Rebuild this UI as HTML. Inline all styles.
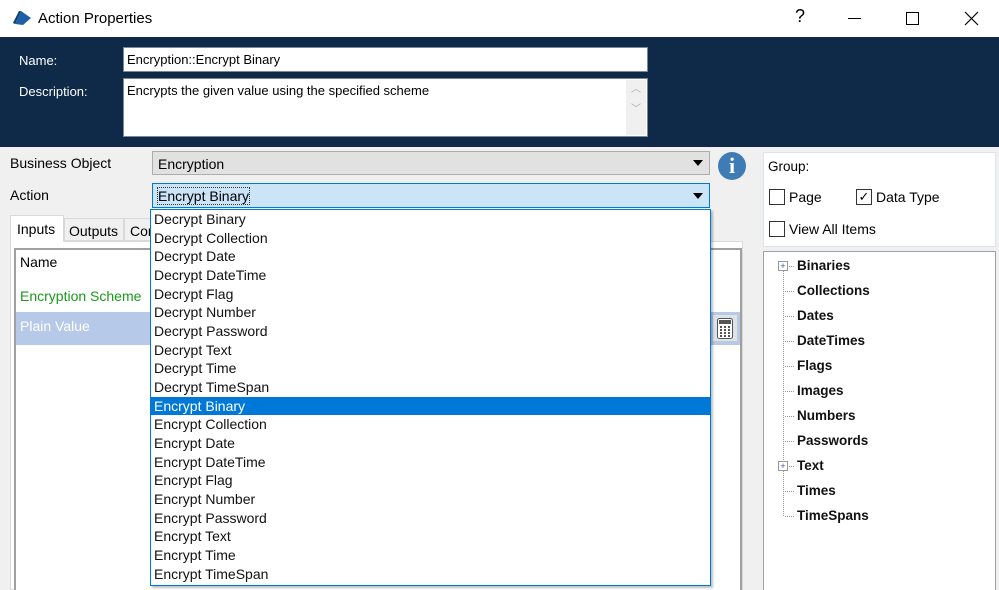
<!DOCTYPE html>
<html><head><meta charset="utf-8"><style>
*{margin:0;padding:0;box-sizing:border-box}
body{width:999px;height:590px;overflow:hidden;background:#f0f0f0;font-family:"Liberation Sans",sans-serif;font-size:13px;color:#000;position:relative}
.a{position:absolute}
.dd div{height:18.68px;line-height:18.68px;padding-left:3px;font-size:14px;color:#111}
.tree div{position:absolute;left:33px;font-weight:bold;font-size:13.5px;color:#111}
.tree i{position:absolute;left:21px;width:9px;height:1px;border-top:1px dotted #999}
</style></head><body>
<div class="a" style="left:0;top:0;width:999px;height:37px;background:#fff"></div>
<svg class="a" style="left:13px;top:9px" width="20" height="18"><path d="M2 15 L8 2 L18 9 L10 16 Z" fill="#1f5fa8"/><path d="M2 15 L8 2 L6 2 L0 14Z" fill="#0e3c70"/></svg>
<div class="a" style="left:38px;top:10px;font-size:15px">Action Properties</div>
<div class="a" style="left:795px;top:6px;font-size:18px">?</div>
<div class="a" style="left:848px;top:18px;width:13px;height:1px;background:#000"></div>
<div class="a" style="left:906px;top:12px;width:13px;height:13px;border:1px solid #000"></div>
<svg class="a" style="left:964px;top:11px" width="15" height="15"><path d="M1 1L14 14M14 1L1 14" stroke="#000" stroke-width="1.2"/></svg>
<div class="a" style="left:0;top:37px;width:999px;height:110px;background:#0e2a48"></div>
<div class="a" style="left:19px;top:53px;color:#fff;font-size:13px">Name:</div>
<div class="a" style="left:19px;top:84px;color:#fff;font-size:13px">Description:</div>
<div class="a" style="left:123px;top:47px;width:525px;height:25px;background:#fff;border:1px solid #7a8796;padding:4px 3px;font-size:13px">Encryption::Encrypt Binary</div>
<div class="a" style="left:123px;top:78px;width:525px;height:59px;background:#fff;border:1px solid #7a8796;padding:4px 3px;font-size:13px">Encrypts the given value using the specified scheme</div>
<div class="a" style="left:626px;top:80px;width:20px;height:55px;background:#f0f0f0;color:#aaa;font-size:10px;text-align:center;line-height:20px">︿<br>﹀</div>
<div class="a" style="left:10px;top:155px;font-size:14px">Business Object</div>
<div class="a" style="left:10px;top:187px;font-size:14px">Action</div>
<div class="a" style="left:152px;top:151px;width:558px;height:24px;background:#e1e1e1;border:1px solid #adadad;padding:4px 5px;font-size:14px">Encryption</div>
<div class="a" style="left:693px;top:160px;border:5px solid transparent;border-top:6px solid #000;border-bottom:0"></div>
<div class="a" style="left:152px;top:183px;width:558px;height:25px;background:#cce4f7;border:1px solid #0078d7;padding:4px 5px;font-size:14px"><span style="outline:1px dotted #333;">Encrypt Binary</span></div>
<div class="a" style="left:693px;top:193px;border:5px solid transparent;border-top:6px solid #000;border-bottom:0"></div>
<div class="a" style="left:718px;top:152px;width:28px;height:28px;border-radius:50%;background:#3f7cb6;color:#fff;font:bold 22px 'Liberation Serif',serif;text-align:center;line-height:28px">i</div>
<div class="a" style="left:10px;top:241px;width:733px;height:349px;background:#fff;border:1px solid #d9d9d9"></div>
<div class="a" style="left:10px;top:215px;width:54px;height:27px;background:#fff;border:1px solid #d9d9d9;border-bottom:0;padding:5px 6px;font-size:14px">Inputs</div>
<div class="a" style="left:64px;top:218px;width:60px;height:23px;background:#f0f0f0;border:1px solid #d9d9d9;padding:4px 4px;font-size:14px">Outputs</div>
<div class="a" style="left:124px;top:218px;width:30px;height:23px;background:#f0f0f0;border:1px solid #d9d9d9;padding:4px 5px;font-size:14px;overflow:hidden">Con</div>
<div class="a" style="left:14px;top:248px;width:728px;height:342px;background:#fff;border-left:2px solid #a0a0a0;border-top:2px solid #a0a0a0"></div>
<div class="a" style="left:740px;top:248px;width:2px;height:342px;background:#a0a0a0"></div>
<div class="a" style="left:20px;top:254px;font-size:14px">Name</div>
<div class="a" style="left:20px;top:288px;font-size:14px;color:#1a9a1a">Encryption Scheme</div>
<div class="a" style="left:16px;top:312px;width:724px;height:33px;background:#b7c9e8"></div>
<div class="a" style="left:20px;top:318px;font-size:14px;color:#fff">Plain Value</div>
<div class="a" style="left:712px;top:314px;width:26px;height:28px;background:#dde3ea;border:1px solid #c0c8d2"></div>
<svg class="a" style="left:717px;top:318px" width="16" height="21"><rect x="0.5" y="0.5" width="15" height="20" rx="2" fill="#fff" stroke="#555"/><rect x="2" y="2" width="12" height="4" fill="#555"/><g fill="#555"><rect x="3" y="8" width="2" height="2"/><rect x="7" y="8" width="2" height="2"/><rect x="11" y="8" width="2" height="2"/><rect x="3" y="11" width="2" height="2"/><rect x="7" y="11" width="2" height="2"/><rect x="11" y="11" width="2" height="2"/><rect x="3" y="14" width="2" height="2"/><rect x="7" y="14" width="2" height="2"/><rect x="11" y="14" width="2" height="2"/><rect x="3" y="17" width="2" height="2"/><rect x="7" y="17" width="2" height="2"/><rect x="11" y="17" width="2" height="2"/></g></svg>
<div class="a dd" style="left:150px;top:209px;width:561px;height:377px;background:#fff;border:1px solid #0078d7;box-shadow:2px 2px 2px rgba(0,0,0,.25)">
<div>Decrypt Binary</div><div>Decrypt Collection</div><div>Decrypt Date</div><div>Decrypt DateTime</div><div>Decrypt Flag</div><div>Decrypt Number</div><div>Decrypt Password</div><div>Decrypt Text</div><div>Decrypt Time</div><div>Decrypt TimeSpan</div>
<div style="background:#0078d7;color:#fff">Encrypt Binary</div><div>Encrypt Collection</div><div>Encrypt Date</div><div>Encrypt DateTime</div><div>Encrypt Flag</div><div>Encrypt Number</div><div>Encrypt Password</div><div>Encrypt Text</div><div>Encrypt Time</div><div>Encrypt TimeSpan</div>
</div>
<div class="a" style="left:763px;top:152px;width:233px;height:95px;background:#fff;border:1px solid #d9e4f0"></div>
<div class="a" style="left:768px;top:159px;font-size:13.5px">Group:</div>
<div class="a" style="left:769px;top:189px;width:16px;height:16px;border:1px solid #333;background:#fff"></div>
<div class="a" style="left:789px;top:189px;font-size:14px">Page</div>
<div class="a" style="left:856px;top:189px;width:16px;height:16px;border:1px solid #333;background:#fff;font-size:13px;line-height:14px;text-align:center">✓</div>
<div class="a" style="left:876px;top:189px;font-size:14px">Data Type</div>
<div class="a" style="left:769px;top:221px;width:16px;height:16px;border:1px solid #333;background:#fff"></div>
<div class="a" style="left:789px;top:221px;font-size:14px">View All Items</div>
<div class="a tree" style="left:763px;top:251px;width:233px;height:339px;background:#fff;border:1px solid #a0a0a0;border-bottom:0">
<div style="left:19px;top:12px;height:252px;width:1px;border-left:1px dotted #999;font-size:0"></div>
<i style="top:14px"></i><i style="top:39px"></i><i style="top:64px"></i><i style="top:89px"></i><i style="top:114px"></i><i style="top:139px"></i><i style="top:164px"></i><i style="top:189px"></i><i style="top:214px"></i><i style="top:239px"></i><i style="top:264px"></i>
<div style="top:6px">Binaries</div><div style="top:31px">Collections</div><div style="top:56px">Dates</div><div style="top:81px">DateTimes</div><div style="top:106px">Flags</div><div style="top:131px">Images</div><div style="top:156px">Numbers</div><div style="top:181px">Passwords</div><div style="top:206px">Text</div><div style="top:231px">Times</div><div style="top:256px">TimeSpans</div>
<div style="left:14px;top:9px;width:10px;height:10px;border:1px solid #999;background:#fff;font-size:9px;line-height:8px;text-align:center;color:#3355aa;font-weight:normal">+</div>
<div style="left:14px;top:209px;width:10px;height:10px;border:1px solid #999;background:#fff;font-size:9px;line-height:8px;text-align:center;color:#3355aa;font-weight:normal">+</div>
</div>
</body></html>
